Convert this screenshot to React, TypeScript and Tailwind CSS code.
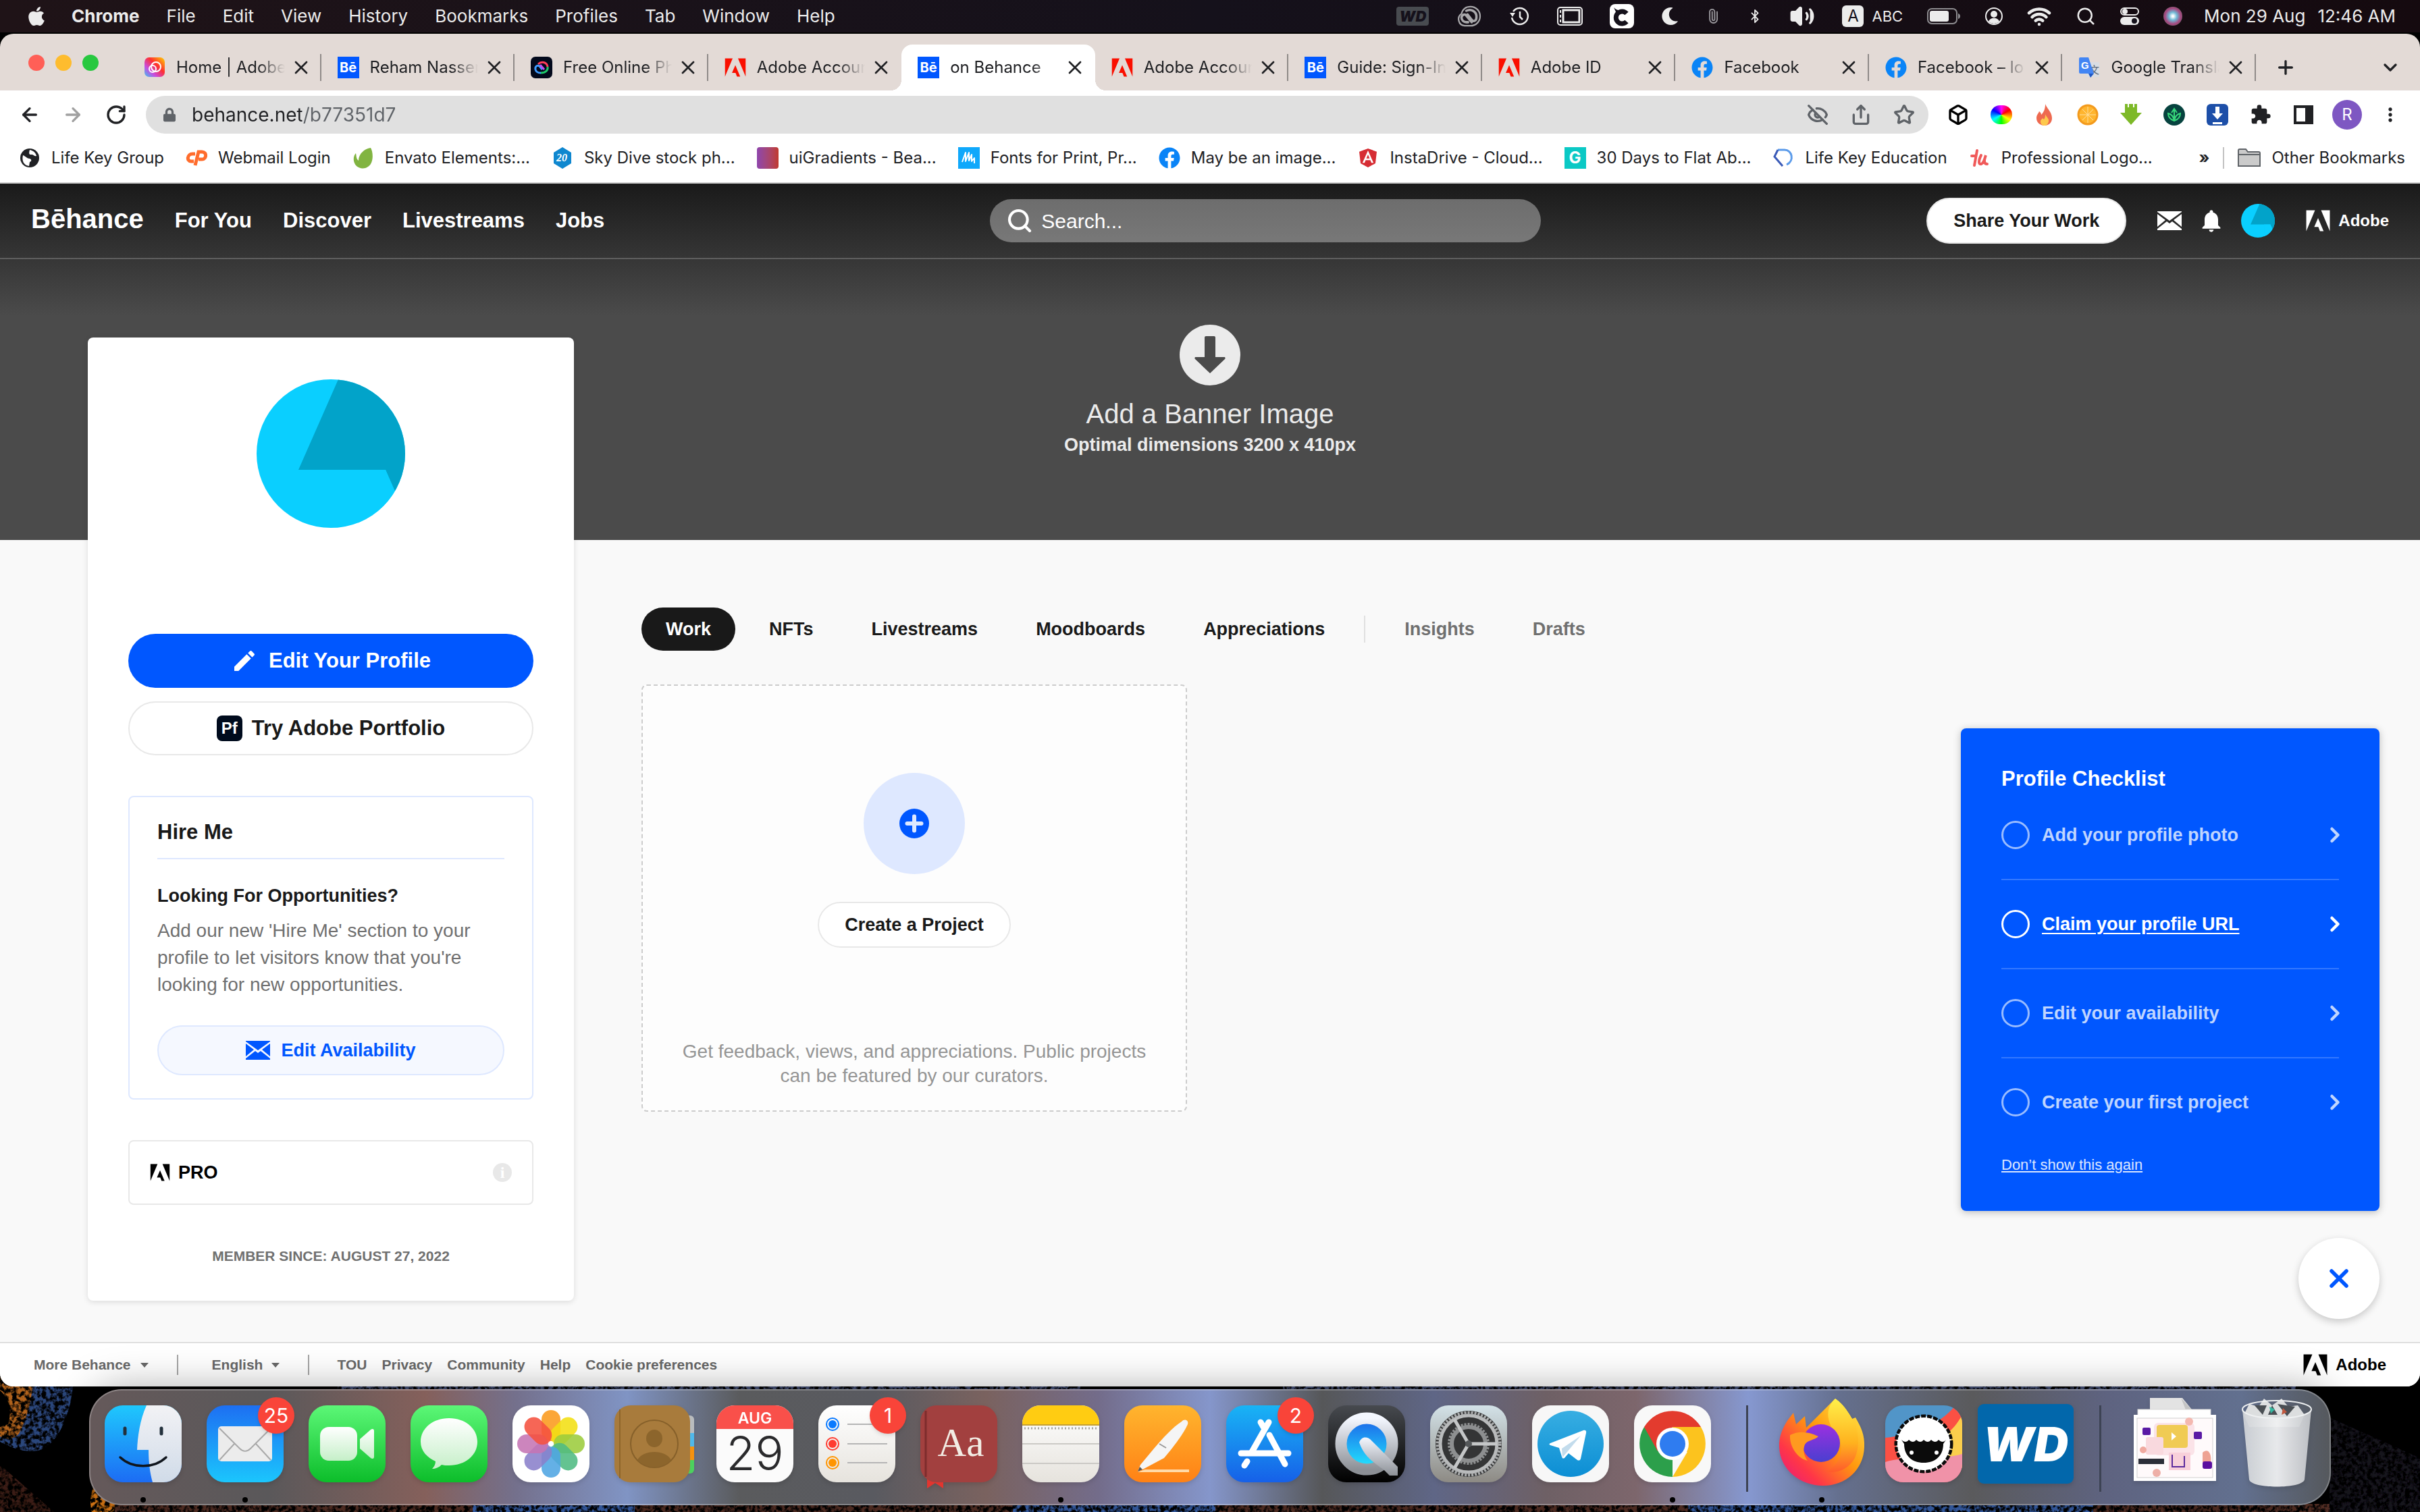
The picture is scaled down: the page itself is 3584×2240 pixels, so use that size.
import type { ReactNode } from "react";
import {
  ArrowLeft,
  ArrowRight,
  Bluetooth,
  Box,
  ChevronDown,
  ChevronRight,
  EyeOff,
  Paperclip,
  Plus,
  RotateCw,
  Search,
  Share,
  Star,
  Volume2,
  Wifi,
  X,
} from "lucide-react";
import {
  FaAngular,
  FaApple,
  FaFacebook,
  FaLock,
  FaMoon,
} from "react-icons/fa";
import { MdEdit, MdExtension, MdMoreVert, MdNotifications } from "react-icons/md";

/* ---------- Shared glyphs ---------- */

interface IconProps {
  className?: string;
}

function AdobeMark({ className }: IconProps) {
  return (
    <svg viewBox="0 1 24 22" className={className} fill="currentColor">
      <path d="M13.966 22.624l-1.69-4.281H8.122l3.892-9.144 5.662 13.425zM8.884 1.376H0v21.248zm15.116 0h-8.884L24 22.624Z" />
    </svg>
  );
}

function MailGlyph({ className }: IconProps) {
  return (
    <svg viewBox="0 0 36 28" className={className} fill="currentColor">
      <path d="M0 0h36v1L18 14 0 1zM0 4l12 9L0 23zM36 4l-12 9 12 10zM0 26l14-11 4 3 4-3 14 11v2H0z" />
    </svg>
  );
}

function Avatar({ className }: IconProps) {
  return (
    <svg viewBox="0 0 220 220" className={className}>
      <clipPath id="avatar-clip">
        <circle cx="110" cy="110" r="110" />
      </clipPath>
      <g clipPath="url(#avatar-clip)">
        <rect width="220" height="220" fill="#0acfff" />
        <path d="M121 0H220V220H228L191 134H62z" fill="#02a3c9" />
        <path d="M191 134L230 222H150V134z" fill="#0acfff" />
      </g>
    </svg>
  );
}

function BehanceBadge() {
  return (
    <span className="flex h-8 w-8 items-center justify-center bg-[#0057ff] text-[20px] leading-none font-bold text-white">
      Bē
    </span>
  );
}

function AdobeFavicon() {
  return <AdobeMark className="h-7 w-8 text-[#fa0f00]" />;
}

function FacebookFavicon() {
  return <FaFacebook className="h-8 w-8 text-[#0a84f7]" />;
}

function CloudLoops({ className }: IconProps) {
  return (
    <svg
      viewBox="0 0 40 36"
      className={className}
      fill="none"
      stroke="currentColor"
      strokeLinecap="round"
    >
      <path d="M12 34a11 11 0 01-5-20C9 6 15 2 22 2c9 0 16 7 16 16s-7 16-16 16z" strokeWidth="2.5" />
      <path d="M24 28l-9-11c-2-3-7-2-8 3 0 5 4 8 8 8h3" strokeWidth="4" />
      <path d="M15 9c8-4 17 1 17 10 0 7-5 9-8 5l-7-9" strokeWidth="4" />
    </svg>
  );
}

function CreativeCloudFavicon({ dark }: { dark?: boolean }) {
  return dark ? (
    <svg viewBox="0 0 32 32" className="h-8 w-8">
      <rect width="32" height="32" rx="7" fill="#03091c" />
      <g fill="none" strokeWidth="3">
        <path d="M17 19l-4-5c-3-2-7 0-6 5 1 4 4 5 8 5" stroke="#3f9bff" />
        <path d="M15 24c7 0 11-4 10-9" stroke="#1ec96b" />
        <path d="M25 15c-1-7-9-9-14-4" stroke="#ff3d5a" />
        <path d="M14 12l6 7" stroke="#c54bf0" />
      </g>
    </svg>
  ) : (
    <svg viewBox="0 0 32 32" className="h-8 w-8">
      <defs>
        <linearGradient id="cc-rainbow" x1="0" y1="1" x2="1" y2="0">
          <stop offset="0" stopColor="#37c8f0" />
          <stop offset=".3" stopColor="#c94be0" />
          <stop offset=".6" stopColor="#ff2f2f" />
          <stop offset="1" stopColor="#ffd500" />
        </linearGradient>
      </defs>
      <rect width="30" height="29" x="1" y="1" rx="7" fill="url(#cc-rainbow)" />
      <g fill="none" stroke="#fff" strokeWidth="2">
        <circle cx="13" cy="18" r="5" />
        <circle cx="18" cy="15" r="7" />
      </g>
    </svg>
  );
}

function TranslateFavicon() {
  return (
    <svg viewBox="0 0 32 32" className="h-8 w-8">
      <rect x="12" y="8" width="19" height="22" rx="2" fill="#d9dde3" />
      <text x="16" y="25" fontSize="15" fill="#5f6b7a" fontFamily="Noto Sans CJK SC">文</text>
      <path d="M3 1h12l8 24H3a2 2 0 01-2-2V3a2 2 0 012-2z" fill="#4285f4" />
      <path d="M15 25h8l-5 6z" fill="#1f57c3" />
      <text x="4" y="18" fontSize="15" fontWeight="700" fill="#fff" fontFamily="Liberation Sans">G</text>
    </svg>
  );
}

/* ---------- macOS menu bar ---------- */

const MENUS = ["File", "Edit", "View", "History", "Bookmarks", "Profiles", "Tab", "Window", "Help"];

function MenuBar() {
  return (
    <header className="relative flex h-12 items-center justify-between bg-linear-to-r from-[#1f1317] via-[#15111b] to-[#150a0f] pr-9 pl-[38px] font-['Inter',sans-serif] text-[26px] leading-none text-[#ececec]">
      <nav className="flex items-center gap-10">
        <FaApple className="h-8 w-8" />
        <button className="-ml-1 font-bold">Chrome</button>
        {MENUS.map((menu) => (
          <button key={menu}>{menu}</button>
        ))}
      </nav>

      <div className="flex items-center gap-10">
        <span className="flex h-7 w-12 items-center justify-center rounded-sm bg-[#484b50] text-[22px] font-black text-[#15111b] italic">
          WD
        </span>
        <CloudLoops className="h-8 w-10 text-[#a9a8ab]" />
        <svg viewBox="0 0 30 30" className="h-[30px] w-[30px]" fill="none" stroke="currentColor" strokeWidth="2.5">
          <path d="M5 8a12 12 0 11-2 9M15 8v8l4 4" />
          <path d="M0 10h8l-4 6z" fill="currentColor" stroke="none" />
        </svg>
        <svg viewBox="0 0 38 28" className="h-7 w-[38px]" fill="none" stroke="currentColor">
          <rect x="1" y="1" width="36" height="26" rx="4" strokeWidth="2" />
          <rect x="9" y="5" width="24" height="18" strokeWidth="3" />
          <path d="M5 5v18" strokeWidth="2" strokeDasharray="4 3" />
        </svg>
        <svg viewBox="0 0 36 36" className="h-9 w-9">
          <rect width="36" height="36" rx="8" fill="#fff" />
          <path d="M25 14a9 9 0 100 12" fill="none" stroke="#15111b" strokeWidth="7" />
          <path d="M6 5c3 4 8 4 14 6l-9 5z" fill="#15111b" />
        </svg>
        <FaMoon className="h-[26px] w-[26px]" />
        <Paperclip className="h-8 w-[22px] -rotate-45 text-[#9c9a9f]" />
        <Bluetooth className="h-[34px] w-[22px]" strokeWidth={2} />
        <Volume2 className="h-[38px] w-[38px]" fill="currentColor" strokeWidth={2} />

        <div className="flex items-center gap-9">
          <span className="flex items-center gap-3 text-[22px]">
            <span className="flex h-8 w-8 items-center justify-center rounded-md bg-[#ececec] text-[24px] text-[#15111b]">
              A
            </span>
            ABC
          </span>
          <svg viewBox="0 0 50 24" className="h-6 w-[50px]">
            <rect x="1" y="1" width="43" height="22" rx="6" fill="none" stroke="#8d8c90" strokeWidth="2" />
            <rect x="4" y="4" width="28" height="16" rx="3" fill="#ececec" />
            <path d="M46 8c4 1 4 7 0 8z" fill="#8d8c90" />
          </svg>
          <svg viewBox="0 0 26 26" className="h-[26px] w-[26px]">
            <circle cx="13" cy="13" r="12" fill="none" stroke="currentColor" strokeWidth="2" />
            <circle cx="13" cy="10" r="5" fill="currentColor" />
            <path d="M5 21c2-7 14-7 16 0a12 12 0 01-16 0z" fill="currentColor" />
          </svg>
          <Wifi className="h-9 w-9" strokeWidth={3} />
          <Search className="h-[30px] w-[30px]" strokeWidth={2} />
          <svg viewBox="0 0 28 26" className="h-[26px] w-7">
            <rect x="1" y="1" width="26" height="10" rx="5" fill="none" stroke="currentColor" strokeWidth="2" />
            <circle cx="7" cy="6" r="4" fill="currentColor" />
            <rect y="14" width="28" height="12" rx="6" fill="currentColor" />
            <circle cx="21" cy="20" r="4" fill="#15111b" />
          </svg>
          <span className="h-7 w-7 rounded-full bg-[radial-gradient(circle,#ffffff_5%,#6fb9d6_30%,#a8447c_60%,#2c8f6b_100%)]" />
          <span className="-ml-1 flex gap-[18px]">
            <span>Mon 29 Aug</span>
            <span>12:46 AM</span>
          </span>
        </div>
      </div>
    </header>
  );
}

/* ---------- Browser chrome ---------- */

interface Tab {
  title: string;
  icon: ReactNode;
  active?: boolean;
  divider?: boolean;
}

const TABS: Tab[] = [
  { title: "Home | Adobe", icon: <CreativeCloudFavicon />, divider: true },
  { title: "Reham Nasser", icon: <BehanceBadge />, divider: true },
  { title: "Free Online Ph", icon: <CreativeCloudFavicon dark />, divider: true },
  { title: "Adobe Accoun", icon: <AdobeFavicon /> },
  { title: "on Behance", icon: <BehanceBadge />, active: true },
  { title: "Adobe Accoun", icon: <AdobeFavicon />, divider: true },
  { title: "Guide: Sign-In", icon: <BehanceBadge />, divider: true },
  { title: "Adobe ID", icon: <AdobeFavicon />, divider: true },
  { title: "Facebook", icon: <FacebookFavicon />, divider: true },
  { title: "Facebook – lo", icon: <FacebookFavicon />, divider: true },
  { title: "Google Transla", icon: <TranslateFavicon />, divider: true },
];

function BrowserTab({ tab }: { tab: Tab }) {
  return (
    <div
      className={`relative flex h-[68px] min-w-0 flex-1 items-center pr-3.5 pl-6 ${
        tab.active ? "rounded-t-2xl bg-white" : ""
      }`}
    >
      {tab.active && (
        <>
          <span className="absolute bottom-0 -left-4 h-4 w-4 bg-[radial-gradient(circle_at_0_0,transparent_16px,white_16px)]" />
          <span className="absolute -right-4 bottom-0 h-4 w-4 bg-[radial-gradient(circle_at_100%_0,transparent_16px,white_16px)]" />
        </>
      )}
      <span className="flex w-8 shrink-0 justify-center">{tab.icon}</span>
      <span className="ml-4 min-w-0 flex-1 overflow-hidden [mask-image:linear-gradient(to_right,black_75%,transparent)] leading-8 whitespace-nowrap">
        {tab.title}
      </span>
      <button aria-label={`Close ${tab.title}`} className="ml-2">
        <X className="h-8 w-8" strokeWidth={2} />
      </button>
      {tab.divider && <span className="absolute top-[14px] right-0 h-10 w-0.5 bg-[#8f8a88]" />}
    </div>
  );
}

function TabStrip() {
  return (
    <div className="flex items-end rounded-t-[20px] bg-[#e3dad6] pt-4 text-[24px]">
      <div className="flex h-[68px] w-[189px] shrink-0 items-center gap-4 pb-3.5 pl-[42px]">
        <button aria-label="Close window" className="h-6 w-6 rounded-full bg-[#ff5f57]" />
        <button aria-label="Minimise window" className="h-6 w-6 rounded-full bg-[#febc2e]" />
        <button aria-label="Zoom window" className="h-6 w-6 rounded-full bg-[#28c840]" />
      </div>
      <div className="flex min-w-0 flex-1">
        {TABS.map((tab, index) => (
          <BrowserTab key={index} tab={tab} />
        ))}
      </div>
      <div className="flex h-[68px] w-[243px] shrink-0 items-center justify-between pr-7 pl-7">
        <button aria-label="New tab">
          <Plus className="h-8 w-8" strokeWidth={2.5} />
        </button>
        <button aria-label="Search tabs">
          <ChevronDown className="h-8 w-8" strokeWidth={2.5} />
        </button>
      </div>
    </div>
  );
}

function Extensions() {
  return (
    <div className="flex items-center gap-8">
      <Box className="h-9 w-8 text-black" strokeWidth={2.5} />
      <span className="h-7 w-8 rounded-full bg-[conic-gradient(#f0f,#f00,#ff0,#0f0,#0ff,#00f,#f0f)]" />
      <svg viewBox="0 0 32 32" className="h-8 w-8">
        <path d="M17 0c2 6 10 12 10 21 0 7-5 11-11 11S4 28 4 21c0-5 3-7 4-10 2 1 3 3 3 5 4-4 6-9 6-16z" fill="#ee6a50" />
        <path d="M17 15c1 4 6 6 5 11-1 4-3 6-6 6s-6-2-6-6c0-3 2-3 3-5l2 2c2-3 2-5 2-8z" fill="#fdc94d" />
      </svg>
      <svg viewBox="0 0 32 32" className="h-8 w-8">
        <circle cx="16" cy="16" r="14" fill="#ffb52e" stroke="#f39a1d" strokeWidth="3" />
        <path d="M16 4v24M4 16h24M8 8l16 16M24 8L8 24" stroke="#ffe0a0" strokeWidth="1" />
      </svg>
      <svg viewBox="0 0 32 32" className="h-8 w-8">
        <path d="M7 0h4v5h2V0h6v5h2V0h4v13h7L16 31 0 13h7z" fill="#7db928" />
      </svg>
      <svg viewBox="0 0 32 32" className="h-8 w-8">
        <circle cx="16" cy="16" r="16" fill="#07433f" />
        <path d="M16 25c-6-2-9-6-9-11 5 1 8 5 9 11 1-6 4-10 9-11 0 5-3 9-9 11zM16 23V7m-4 6l4-6 4 6" fill="none" stroke="#37d67a" strokeWidth="2" />
      </svg>
      <svg viewBox="0 0 32 32" className="h-8 w-8">
        <rect width="32" height="32" rx="6" fill="#1d4fa8" />
        <path d="M13 4h6v10h5l-8 9-8-9h5z" fill="#fff" />
        <path d="M9 27h14v3H9z" fill="#fff" />
      </svg>
      <MdExtension className="h-[34px] w-8 text-[#202124]" />
      <svg viewBox="0 0 32 28" className="h-7 w-8">
        <rect x="3" y="2" width="25" height="24" fill="none" stroke="#202124" strokeWidth="4" />
        <rect x="18" y="2" width="10" height="24" fill="#202124" />
      </svg>
      <span className="-mx-1.5 flex h-11 w-11 items-center justify-center rounded-full bg-[#7e57c2] text-[24px] text-white">
        R
      </span>
      <button aria-label="Browser menu" className="-mr-2 text-[#202124]">
        <MdMoreVert className="h-10 w-8" />
      </button>
    </div>
  );
}

function Toolbar() {
  return (
    <div className="flex items-center gap-7 bg-white py-2 pr-9 pl-7">
      <div className="flex items-center gap-8">
        <button aria-label="Back">
          <ArrowLeft className="h-8 w-8" strokeWidth={2.5} />
        </button>
        <button aria-label="Forward" className="text-[#a0a0a0]">
          <ArrowRight className="h-8 w-8" strokeWidth={2.5} />
        </button>
        <button aria-label="Reload">
          <RotateCw className="h-8 w-8" strokeWidth={2.5} />
        </button>
      </div>
      <div className="flex h-14 flex-1 items-center gap-8 rounded-full bg-[#e0e0e0] pr-5 pl-[26px] text-[#5f6368]">
        <FaLock className="h-[22px] w-[18px]" />
        <input
          aria-label="Address"
          defaultValue="behance.net/b77351d7"
          className="-ml-2 min-w-0 flex-1 bg-[linear-gradient(to_right,#202124_163px,#5f6368_163px)] bg-clip-text text-[28px] leading-10 text-transparent outline-none"
        />
        <EyeOff className="h-8 w-8" strokeWidth={2.5} />
        <Share className="h-8 w-8" strokeWidth={2.5} />
        <Star className="h-8 w-8" strokeWidth={2.5} />
      </div>
      <Extensions />
    </div>
  );
}

const BOOKMARKS: { title: string; icon: ReactNode }[] = [
  {
    title: "Life Key Group",
    icon: (
      <svg viewBox="0 0 32 32" className="h-8 w-8">
        <circle cx="16" cy="16" r="14" fill="#202124" />
        <path d="M6 12c5 2 6 5 10 5 3 1 3 4 0 5l-1 6C7 27 4 20 6 12zM16 4c5 1 9 4 10 9-4 1-4-2-7-2s-5 0-3-7z" fill="#fff" />
      </svg>
    ),
  },
  {
    title: "Webmail Login",
    icon: (
      <svg viewBox="0 0 32 24" className="h-6 w-8" fill="none" stroke="#ff6c2c" strokeWidth="5">
        <path d="M14 6h-4c-8 0-9 11-2 11h4M14 23l5-20h5c8 0 7 11 0 11h-5" />
      </svg>
    ),
  },
  {
    title: "Envato Elements:...",
    icon: (
      <svg viewBox="0 0 32 32" className="h-8 w-8">
        <path d="M27 1c3 5 4 15 1 22-4 9-15 11-22 5-6-6-5-15-1-19 1 3 0 8 4 11C9 10 18 2 27 1z" fill="#81b441" />
      </svg>
    ),
  },
  {
    title: "Sky Dive stock ph...",
    icon: (
      <svg viewBox="0 0 32 32" className="h-8 w-8">
        <path d="M16 0l13 8v16l-13 8-13-8V8z" fill="#0f87cf" />
        <text x="7" y="21" fontSize="16" fontWeight="700" fontStyle="italic" fill="#fff" fontFamily="Liberation Serif">20</text>
      </svg>
    ),
  },
  {
    title: "uiGradients - Bea...",
    icon: <span className="h-8 w-8 rounded-sm bg-linear-to-r from-[#8e44ad] to-[#c0392b]" />,
  },
  {
    title: "Fonts for Print, Pr...",
    icon: (
      <svg viewBox="0 0 32 32" className="h-8 w-8">
        <rect width="32" height="32" fill="#0fa8fb" />
        <path d="M6 22l5-14v13l5-13v12l4-9v10l4-5v8" fill="none" stroke="#fff" strokeWidth="2" strokeLinejoin="round" />
      </svg>
    ),
  },
  { title: "May be an image...", icon: <FacebookFavicon /> },
  { title: "InstaDrive - Cloud...", icon: <FaAngular className="h-8 w-8 text-[#d62d34]" /> },
  {
    title: "30 Days to Flat Ab...",
    icon: (
      <span className="flex h-8 w-8 items-center justify-center bg-[#0bc9c5] text-[24px] font-bold text-white">
        G
      </span>
    ),
  },
  {
    title: "Life Key Education",
    icon: (
      <svg viewBox="0 0 32 28" className="h-7 w-8" fill="none" strokeWidth="3">
        <path d="M21 24c12-6 8-22-3-22L8 2" stroke="#5b9bea" />
        <path d="M8 2L3 12l12 14" stroke="#3b5bb8" />
      </svg>
    ),
  },
  {
    title: "Professional Logo...",
    icon: (
      <svg viewBox="0 0 32 28" className="h-7 w-8" fill="none" stroke="#f05a5a" strokeWidth="4" strokeLinecap="round">
        <path d="M12 3L8 25M4 11h6M18 10c-4 8-4 14 0 13s5-8 7-13c-3 8-3 13 2 13" />
      </svg>
    ),
  },
];

function BookmarksBar() {
  return (
    <div className="flex h-[66px] items-center border-b-2 border-[#cfcfcf] bg-white pr-[22px] pb-2 pl-7 text-[24px]">
      <div className="flex min-w-0 items-center gap-8">
        {BOOKMARKS.map((bookmark) => (
          <a key={bookmark.title} href="#" className="flex shrink-0 items-center gap-4 whitespace-nowrap">
            {bookmark.icon}
            {bookmark.title}
          </a>
        ))}
      </div>
      <button aria-label="More bookmarks" className="ml-auto font-bold">
        »
      </button>
      <span className="mr-5 ml-5 h-8 w-0.5 bg-[#c4c4c4]" />
      <a href="#" className="flex shrink-0 items-center gap-4">
        <svg viewBox="0 0 34 28" className="h-7 w-[34px]">
          <path d="M1 26V3a2 2 0 012-2h9l3 4h16a2 2 0 012 2v19z" fill="#cbcbcb" stroke="#5f6368" strokeWidth="2" />
          <path d="M1 9h32" stroke="#5f6368" strokeWidth="2" />
        </svg>
        Other Bookmarks
      </a>
    </div>
  );
}

/* ---------- Behance page ---------- */

function SiteHeader() {
  return (
    <header className="flex h-28 items-center border-b-2 border-white/20 px-[46px] text-[31px] font-bold text-white">
      <nav className="flex items-center gap-[46px]">
        <a href="#" className="pb-1.5 text-[40px] leading-none">
          Bēhance
        </a>
        <a href="#">For You</a>
        <a href="#">Discover</a>
        <a href="#">Livestreams</a>
        <a href="#">Jobs</a>
      </nav>

      <label className="mx-auto flex h-16 w-[816px] items-center gap-3 rounded-full bg-white/35 px-6">
        <Search className="h-10 w-10" strokeWidth={2.5} />
        <input
          type="search"
          aria-label="Search"
          placeholder="Search..."
          className="min-w-0 flex-1 text-[30px] font-normal outline-none placeholder:text-white"
        />
      </label>

      <div className="flex items-center">
        <button className="h-[68px] rounded-full border-2 border-[#e8e8e8] bg-white px-[38px] text-[27px] text-[#191919]">
          Share Your Work
        </button>
        <button aria-label="Messages" className="ml-[46px]">
          <MailGlyph className="h-7 w-9" />
        </button>
        <button aria-label="Notifications" className="ml-6">
          <MdNotifications className="h-10 w-10" />
        </button>
        <button aria-label="Account" className="ml-6">
          <Avatar className="h-[50px] w-[50px]" />
        </button>
        <a href="#" className="ml-[46px] flex items-center gap-3 text-[24px]">
          <AdobeMark className="h-8 w-9" />
          Adobe
        </a>
      </div>
    </header>
  );
}

function Banner() {
  return (
    <button className="flex h-[416px] w-full flex-col items-center pt-[97px] text-[#ebebeb]">
      <svg viewBox="0 0 90 90" className="h-[90px] w-[90px]">
        <circle cx="45" cy="45" r="45" fill="#ebebeb" />
        <path d="M39 17h12a2 2 0 012 2v29h13c2 0 2 2 1 3L45 72 23 51c-1-1-1-3 1-3h13V19a2 2 0 012-2z" fill="#4b4b4b" />
      </svg>
      <span className="mt-4 text-[40px] leading-[52px]">Add a Banner Image</span>
      <span className="text-[27px] leading-10 font-bold">Optimal dimensions 3200 x 410px</span>
    </button>
  );
}

function ProfileCard() {
  return (
    <aside className="-mt-[300px] w-[720px] shrink-0 rounded-lg bg-white px-[60px] pt-[62px] pb-[50px] shadow-[0_2px_8px_rgba(0,0,0,0.12)]">
      <Avatar className="mx-auto h-[220px] w-[220px]" />

      {/* Profile actions */}
      <div className="mt-[157px] space-y-5 text-[31px] font-bold">
        <button className="flex h-20 w-full items-center justify-center gap-4 rounded-full bg-[#0057ff] text-white">
          <MdEdit className="h-10 w-10" />
          Edit Your Profile
        </button>
        <button className="flex h-20 w-full items-center justify-center gap-3.5 rounded-full border-2 border-[#e8e8e8] text-[#191919]">
          <span className="flex h-[38px] w-[38px] items-center justify-center rounded-lg bg-[#000b1d] text-[24px] leading-none text-white">
            Pf
          </span>
          Try Adobe Portfolio
        </button>
      </div>

      {/* Hire me */}
      <section className="mt-[60px] rounded-lg border-2 border-[#dee8ff] px-[41px] pb-[34px] text-[#191919]">
        <h2 className="border-b-2 border-[#dee8ff] pt-8 pb-[18px] text-[31px] leading-10 font-bold">
          Hire Me
        </h2>
        <h3 className="mt-[34px] text-[27px] leading-10 font-bold">Looking For Opportunities?</h3>
        <p className="mt-3 text-[28px] leading-10 text-[#707070]">
          Add our new 'Hire Me' section to your profile to let visitors know that you're looking for
          new opportunities.
        </p>
        <button className="mt-10 flex h-[74px] w-full items-center justify-center gap-4 rounded-full border-2 border-[#dee8ff] bg-[#f5f8ff] text-[27px] font-bold text-[#0057ff]">
          <MailGlyph className="h-7 w-9" />
          Edit Availability
        </button>
      </section>

      {/* Adobe Pro */}
      <div className="mt-[60px] flex h-24 items-center rounded-lg border-2 border-[#e8e8e8] px-[30px] text-black">
        <AdobeMark className="h-[26px] w-[30px]" />
        <span className="ml-3 text-[27px] font-bold">PRO</span>
        <button
          aria-label="About Adobe Pro"
          className="ml-auto flex h-7 w-7 items-center justify-center rounded-full bg-[#e8e8e8] font-['Liberation_Serif',serif] text-[24px] font-bold text-white"
        >
          i
        </button>
      </div>

      <p className="mt-[60px] text-center text-[21px] leading-8 font-bold text-[#707070]">
        MEMBER SINCE: AUGUST 27, 2022
      </p>
    </aside>
  );
}

const PROFILE_TABS = ["NFTs", "Livestreams", "Moodboards", "Appreciations"];

function WorkArea() {
  return (
    <section className="min-w-0 flex-1 pt-[100px]">
      <nav className="flex h-16 items-center gap-3.5 text-[27px] font-bold text-[#191919]">
        <button className="h-16 rounded-full bg-[#191919] px-9 text-white">Work</button>
        {PROFILE_TABS.map((tab) => (
          <button key={tab} className="h-16 px-9">
            {tab}
          </button>
        ))}
        <span className="mx-2 h-10 w-0.5 bg-[#e0e0e0]" />
        <button className="h-16 px-9 text-[#707070]">Insights</button>
        <button className="h-16 px-9 text-[#707070]">Drafts</button>
      </nav>

      <div className="mt-[50px] flex h-[633px] w-[808px] flex-col items-center rounded-lg border-2 border-dashed border-[#cccccc] bg-[#fdfdfd]">
        <span className="mt-[129px] flex h-[150px] w-[150px] items-center justify-center rounded-full bg-[#dee8ff]">
          <span className="flex h-11 w-11 items-center justify-center rounded-full bg-[#0057ff]">
            <Plus className="h-9 w-9 text-[#dee8ff]" strokeWidth={4} />
          </span>
        </span>
        <button className="mt-[41px] h-[68px] rounded-full border-2 border-[#e8e8e8] bg-white px-[38px] text-[27px] font-bold text-[#191919]">
          Create a Project
        </button>
        <p className="mt-[136px] px-10 text-center text-[28px] leading-9 text-[#959595]">
          Get feedback, views, and appreciations. Public projects can be featured by our curators.
        </p>
      </div>
    </section>
  );
}

const CHECKLIST = [
  { label: "Add your profile photo" },
  { label: "Claim your profile URL", current: true },
  { label: "Edit your availability" },
  { label: "Create your first project" },
];

function ProfileChecklist() {
  return (
    <div className="absolute right-[60px] bottom-[34px] flex w-[620px] flex-col items-end">
      <section className="w-full rounded-lg bg-[#0057ff] px-[60px] pt-[53px] pb-[50px] text-white shadow-[0_2px_12px_rgba(0,0,0,0.25)]">
        <h2 className="text-[31px] leading-[44px] font-bold">Profile Checklist</h2>
        <ul className="-mt-1 divide-y-2 divide-white/20 text-[27px] font-bold">
          {CHECKLIST.map((item) => (
            <li key={item.label}>
              <a
                href="#"
                className={`flex h-[130px] items-center ${item.current ? "underline underline-offset-4" : "text-white/75"}`}
              >
                <span
                  className={`h-[42px] w-[42px] rounded-full border-3 ${
                    item.current ? "border-white" : "border-white/60"
                  }`}
                />
                <span className="ml-[18px]">{item.label}</span>
                <ChevronRight className="-mr-3 ml-auto h-9 w-9" strokeWidth={3} />
              </a>
            </li>
          ))}
        </ul>
        <button className="mt-2.5 text-[22px] leading-9 text-white/85 underline">
          Don’t show this again
        </button>
      </section>
      <button
        aria-label="Close checklist"
        className="mt-10 flex h-[120px] w-[120px] items-center justify-center rounded-full bg-white text-[#0057ff] shadow-[0_4px_12px_rgba(0,0,0,0.2)]"
      >
        <X className="h-11 w-11" strokeWidth={3} />
      </button>
    </div>
  );
}

function Caret() {
  return (
    <svg viewBox="0 0 12 7" className="h-[7px] w-3" fill="currentColor">
      <path d="M0 0h12L6 7z" />
    </svg>
  );
}

function SiteFooter() {
  return (
    <footer className="flex h-[66px] items-center rounded-b-[20px] border-t-2 border-[#dfdfdf] bg-white px-[50px] text-[21px] font-bold text-[#696969]">
      <button className="flex items-center gap-3.5">
        More Behance
        <Caret />
      </button>
      <span className="mx-[42px] h-[30px] w-0.5 bg-[#a5a5a5]" />
      <label className="flex items-center gap-3 pl-2">
        <select aria-label="Language" className="appearance-none" defaultValue="English">
          <option>English</option>
        </select>
        <Caret />
      </label>
      <span className="mx-[42px] h-[30px] w-0.5 bg-[#a5a5a5]" />
      <nav className="flex gap-[22px]">
        <a href="#">TOU</a>
        <a href="#">Privacy</a>
        <a href="#">Community</a>
        <a href="#">Help</a>
        <a href="#">Cookie preferences</a>
      </nav>
      <a href="#" className="ml-auto flex items-center gap-3 text-[24px] text-black">
        <AdobeMark className="h-8 w-9" />
        Adobe
      </a>
    </footer>
  );
}

function BehancePage() {
  return (
    <div className="flex flex-1 flex-col rounded-b-[20px] bg-[#f9f9f9] font-['Liberation_Sans',Arial,sans-serif]">
      <div className="bg-[#4b4b4b] bg-[linear-gradient(#1a1a1a,#4b4b4b_196px)]">
        <SiteHeader />
        <Banner />
      </div>
      <main className="relative flex flex-1 items-start gap-[100px] px-[130px] pb-[61px]">
        <ProfileCard />
        <WorkArea />
        <ProfileChecklist />
      </main>
      <SiteFooter />
    </div>
  );
}

/* ---------- Dock ---------- */

interface DockApp {
  name: string;
  art: ReactNode;
  running?: boolean;
  badge?: string;
}

function Tile({ fill }: { fill: string }) {
  return <rect width="114" height="114" rx="27" fill={fill} />;
}

function DockGradients() {
  return (
    <svg className="absolute h-0 w-0" aria-hidden="true">
      <defs>
        <linearGradient id="d-cyan" x2="0" y2="1">
          <stop stopColor="#1fc8fd" />
          <stop offset="1" stopColor="#1c6cf4" />
        </linearGradient>
        <linearGradient id="d-mail" x2="0" y2="1">
          <stop stopColor="#1d6ff2" />
          <stop offset="1" stopColor="#1bc6fd" />
        </linearGradient>
        <linearGradient id="d-store" x2="0" y2="1">
          <stop stopColor="#19b4f5" />
          <stop offset="1" stopColor="#1660e8" />
        </linearGradient>
        <linearGradient id="d-green" x2="0" y2="1">
          <stop stopColor="#5cf777" />
          <stop offset="1" stopColor="#0cbd2a" />
        </linearGradient>
        <linearGradient id="d-glass" x2="0" y2="1">
          <stop stopColor="#ffffff" />
          <stop offset="1" stopColor="#c5efc8" />
        </linearGradient>
        <linearGradient id="d-pale" x2="0" y2="1">
          <stop stopColor="#ffffff" />
          <stop offset="1" stopColor="#e6e3dd" />
        </linearGradient>
        <linearGradient id="d-face" x2="0" y2="1">
          <stop stopColor="#f2f2f5" />
          <stop offset="1" stopColor="#d0dbe8" />
        </linearGradient>
        <linearGradient id="d-orange" x2="0" y2="1">
          <stop stopColor="#ffb52e" />
          <stop offset="1" stopColor="#ff8115" />
        </linearGradient>
        <linearGradient id="d-black" x2="0" y2="1">
          <stop stopColor="#474a4f" />
          <stop offset="1" stopColor="#000000" />
        </linearGradient>
        <linearGradient id="d-steel" x2="0" y2="1">
          <stop stopColor="#d3e2e8" />
          <stop offset="1" stopColor="#8d8a84" />
        </linearGradient>
        <linearGradient id="d-telegram" x2="0" y2="1">
          <stop stopColor="#37aee2" />
          <stop offset="1" stopColor="#0c8ed4" />
        </linearGradient>
        <linearGradient id="d-ring" x2="0" y2="1">
          <stop stopColor="#f4f7ff" />
          <stop offset="1" stopColor="#8c9096" />
        </linearGradient>
        <linearGradient id="d-lens" x2="0" y2="1">
          <stop stopColor="#1c63e8" />
          <stop offset="1" stopColor="#22eaff" />
        </linearGradient>
        <linearGradient id="d-fox" x1="1" y1="0" x2="0" y2="1">
          <stop stopColor="#fff44f" />
          <stop offset=".45" stopColor="#ff980e" />
          <stop offset=".75" stopColor="#ff3647" />
          <stop offset="1" stopColor="#e31587" />
        </linearGradient>
        <linearGradient id="d-flame" x2="0" y2="1">
          <stop stopColor="#fff04a" />
          <stop offset=".6" stopColor="#ffb21e" />
          <stop offset="1" stopColor="#ff5a2c" />
        </linearGradient>
        <linearGradient id="d-globe" x2="0" y2="1">
          <stop stopColor="#9b30e0" />
          <stop offset="1" stopColor="#4a3fd0" />
        </linearGradient>
        <linearGradient id="d-bin">
          <stop stopColor="#cfd2d6" />
          <stop offset=".5" stopColor="#f0f1f2" />
          <stop offset="1" stopColor="#c3c6ca" />
        </linearGradient>
      </defs>
    </svg>
  );
}

const PETALS: [number, string][] = [
  [0, "#fb9a1c"],
  [45, "#f2df12"],
  [90, "#9ccc3c"],
  [135, "#4fbb82"],
  [180, "#4fa5e2"],
  [225, "#8a7fcb"],
  [270, "#c574b4"],
  [315, "#f5513f"],
];

const DOCK_LEFT: DockApp[] = [
  {
    name: "Finder",
    running: true,
    art: (
      <>
        <clipPath id="finder-clip">
          <rect width="114" height="114" rx="27" />
        </clipPath>
        <g clipPath="url(#finder-clip)">
          <rect width="114" height="114" fill="url(#d-cyan)" />
          <path d="M62 0C52 22 49 46 48 66h17c0 18 2 34 6 48h43V0z" fill="url(#d-face)" />
        </g>
        <path d="M30 34v8M84 34v8" stroke="#22303c" strokeWidth="5" strokeLinecap="round" />
        <path d="M23 77c18 17 50 17 68 0" fill="none" stroke="#10151c" strokeWidth="3.5" strokeLinecap="round" />
      </>
    ),
  },
  {
    name: "Mail",
    running: true,
    badge: "25",
    art: (
      <>
        <Tile fill="url(#d-mail)" />
        <rect x="17" y="31" width="80" height="52" rx="5" fill="#ececec" />
        <path d="M19 81l22-24M95 81L73 57M19 34l30 30c5 5 11 5 16 0l30-30" fill="none" stroke="#a9a9a9" strokeWidth="2" />
      </>
    ),
  },
  {
    name: "FaceTime",
    art: (
      <>
        <Tile fill="url(#d-green)" />
        <rect x="17" y="32" width="55" height="50" rx="13" fill="url(#d-glass)" />
        <path d="M76 50l16-14c3-2 5-1 5 2v38c0 3-2 4-5 2L76 64z" fill="url(#d-glass)" />
      </>
    ),
  },
  {
    name: "Messages",
    art: (
      <>
        <Tile fill="url(#d-green)" />
        <path d="M57 19c24 0 42 15 42 35S81 89 57 89c-4 0-8 0-11-1-4 4-9 6-14 6 3-3 5-7 5-11-13-6-22-16-22-29 0-20 18-35 42-35z" fill="url(#d-glass)" />
      </>
    ),
  },
  {
    name: "Photos",
    art: (
      <>
        <Tile fill="#ffffff" />
        {PETALS.map(([angle, color]) => (
          <rect
            key={angle}
            x="43"
            y="7"
            width="28"
            height="46"
            rx="14"
            fill={color}
            fillOpacity=".88"
            transform={`rotate(${angle} 57 57)`}
          />
        ))}
      </>
    ),
  },
  {
    name: "Contacts",
    art: (
      <>
        <path d="M100 15h12a6 6 0 016 6v20h-18z" fill="#b9bcbe" />
        <path d="M100 41h18v20h-18z" fill="#4fb8ea" />
        <path d="M100 61h18v20h-18z" fill="#f5920f" />
        <path d="M100 81h18v14a6 6 0 01-6 6h-12z" fill="#4cd15e" />
        <rect width="112" height="114" rx="24" fill="#a87b3c" />
        <path d="M8 6v102" stroke="#8f6629" strokeWidth="2" />
        <circle cx="59" cy="57" r="35" fill="none" stroke="#86602a" strokeWidth="2" />
        <ellipse cx="59" cy="49" rx="12" ry="13" fill="#8c652c" />
        <path d="M34 81c8-16 42-16 50 0a35 35 0 01-50 0z" fill="#8c652c" />
      </>
    ),
  },
  {
    name: "Calendar",
    art: (
      <>
        <Tile fill="#fbfbfb" />
        <path d="M0 35V27A27 27 0 0127 0h60a27 27 0 0127 27v8z" fill="#f9504a" />
        <text x="57" y="27" textAnchor="middle" fontSize="23" fontWeight="600" fill="#fff" fontFamily="Inter">AUG</text>
        <text x="57" y="96" textAnchor="middle" fontSize="70" fontWeight="300" fill="#2a2a2c" fontFamily="Inter">29</text>
      </>
    ),
  },
  {
    name: "Reminders",
    badge: "1",
    art: (
      <>
        <Tile fill="url(#d-pale)" />
        <path d="M43 28h59M43 57h59M43 85h59" stroke="#b5b5b5" strokeWidth="2" />
        <g fill="none" strokeWidth="2">
          <circle cx="21" cy="28" r="9" stroke="#0a7aff" />
          <circle cx="21" cy="57" r="9" stroke="#ff3b30" />
          <circle cx="21" cy="85" r="9" stroke="#ff9500" />
        </g>
        <circle cx="21" cy="28" r="6" fill="#0a7aff" />
        <circle cx="21" cy="57" r="6" fill="#ff3b30" />
        <circle cx="21" cy="85" r="6" fill="#ff9500" />
      </>
    ),
  },
  {
    name: "Dictionary",
    art: (
      <>
        <path d="M10 104h24v19l-12-8-12 8z" fill="#e2352f" />
        <rect width="114" height="114" rx="24" fill="#a2403f" />
        <path d="M8 8v98" stroke="#7d2c2d" strokeWidth="3" />
        <text x="60" y="75" textAnchor="middle" fontSize="59" fill="#f2ece4" fontFamily="Liberation Serif">Aa</text>
      </>
    ),
  },
  {
    name: "Notes",
    running: true,
    art: (
      <>
        <Tile fill="url(#d-pale)" />
        <path d="M0 29v-2A27 27 0 0127 0h60a27 27 0 0127 27v2z" fill="#ffcc12" />
        <path d="M0 29h114" stroke="#c5a033" strokeWidth="2" />
        <path d="M3 34h108" stroke="#a5a5a0" strokeWidth="3" strokeDasharray="2 3" />
        <path d="M0 57h114M0 86h114" stroke="#cbc9c5" strokeWidth="2" />
      </>
    ),
  },
  {
    name: "Pages",
    art: (
      <>
        <Tile fill="url(#d-orange)" />
        <path d="M30 95h66v4H20z" fill="#ffd9a8" />
        <path d="M85 24c4-5 11-2 9 4-5 12-21 34-35 50L29 94l-9 4 4-10 20-24c13-15 28-32 41-40z" fill="#f5f5f5" />
        <path d="M52 57l10 6" stroke="#9a9a9a" strokeWidth="2" />
        <path d="M20 98l3-7 4 4z" fill="#555" />
      </>
    ),
  },
  {
    name: "App Store",
    badge: "2",
    art: (
      <>
        <Tile fill="url(#d-store)" />
        <g fill="none" stroke="#fff" strokeWidth="9" strokeLinecap="round">
          <path d="M63 25L38 69M51 25l4 7M64 44l23 43M31 83l-4 6" />
          <path d="M22 71h70" />
        </g>
      </>
    ),
  },
  {
    name: "QuickTime Player",
    art: (
      <>
        <Tile fill="url(#d-black)" />
        <circle cx="57" cy="57" r="38" fill="url(#d-lens)" stroke="url(#d-ring)" strokeWidth="17" />
        <path d="M46 55c3-9 12-10 19-2l38 38v13H91l-9-9c-18-12-30-22-36-40z" fill="url(#d-ring)" />
      </>
    ),
  },
  {
    name: "System Preferences",
    art: (
      <>
        <Tile fill="url(#d-steel)" />
        <circle cx="57" cy="57" r="49" fill="#343536" />
        <circle cx="57" cy="57" r="42" fill="none" stroke="#b9bbbc" strokeWidth="5" />
        <circle cx="57" cy="57" r="46" fill="none" stroke="#a9abac" strokeWidth="5" strokeDasharray="3 2" />
        <circle cx="57" cy="57" r="25" fill="none" stroke="#8d8f90" strokeWidth="6" />
        <circle cx="57" cy="57" r="29" fill="none" stroke="#8d8f90" strokeWidth="4" strokeDasharray="3 2" />
        <path d="M57 57h42M57 57L36 21M57 57L36 93" stroke="#c4c6c7" strokeWidth="5" />
        <circle cx="57" cy="57" r="5" fill="#55585a" />
      </>
    ),
  },
  {
    name: "Telegram",
    art: (
      <>
        <Tile fill="#f7f7f7" />
        <circle cx="57" cy="57" r="49" fill="url(#d-telegram)" />
        <path d="M27 56l49-19c3-1 5 1 4 4l-8 38c-1 3-3 3-5 2L54 71l-6 7c-2 1-3 1-4-2l-4-13-13-4c-2-1-2-2 0-3z" fill="#fff" />
        <path d="M44 64l28-19-20 24-7 8z" fill="#c3dcec" />
      </>
    ),
  },
  {
    name: "Google Chrome",
    running: true,
    art: (
      <>
        <Tile fill="#f8f8f8" />
        <path d="M57 57v49A49 49 0 0115 32z" fill="#2c9f4b" />
        <path d="M57 57V32h42a49 49 0 01-42 74l22-37z" fill="#fcc31e" />
        <path d="M57 32h42A49 49 0 0015 32l20 36z" fill="#e33b2e" />
        <circle cx="57" cy="57" r="24" fill="#fff" />
        <circle cx="57" cy="57" r="19" fill="#2f7cf0" />
      </>
    ),
  },
];

const DOCK_APPS: DockApp[] = [
  {
    name: "Firefox",
    running: true,
    art: (
      <>
        <path d="M77-10c14 10 20 22 25 30l5-2c8 14 14 26 13 44-1 33-27 57-61 57S-5 95-6 62c-1-16 6-31 14-42l7-9 4 17 13-12 2 17z" fill="url(#d-fox)" />
        <path d="M77-10c14 10 20 22 25 30 10 18 12 40 4 58-8 15-26 24-42 20 22-12 26-34 17-50C71 34 56 10 77-10z" fill="url(#d-flame)" />
        <circle cx="56" cy="56" r="28" fill="url(#d-globe)" />
        <path d="M10 44c12-6 26-6 42 2-6 6-16 5-20 12-3 7-2 16 4 24C20 78 9 60 10 44z" fill="#ff9a1f" />
      </>
    ),
  },
  {
    name: "Sheep",
    art: (
      <>
        <clipPath id="sheep-clip">
          <rect width="114" height="114" rx="27" />
        </clipPath>
        <g clipPath="url(#sheep-clip)">
          <rect width="114" height="114" fill="#5195c8" />
          <path d="M0 48C40 44 80 30 104 0h10v114H0z" fill="#fb5044" />
          <path d="M50 64c30-10 50-24 64-50v80H50z" fill="#fbce4c" />
          <path d="M0 84c30-10 80-2 114-12v42H0z" fill="#f092a8" />
        </g>
        <circle cx="57" cy="57" r="41" fill="#fff" stroke="#0b0b0b" strokeWidth="5" strokeDasharray="7 2" />
        <circle cx="57" cy="57" r="39" fill="#fff" />
        <path d="M24 51c4 4 8 4 11 0 4 4 8 4 11 0 4 4 8 4 11 0 4 4 8 4 11 0 4 4 8 4 11 0 4 4 8 4 11 0l-4 6c0 18-12 28-29 28S28 75 28 57z" fill="#0b0b0b" />
        <circle cx="39" cy="70" r="3" fill="#fff" />
        <circle cx="76" cy="70" r="3" fill="#fff" />
      </>
    ),
  },
  {
    name: "WD",
    art: (
      <>
        <rect x="-14" y="-2" width="142" height="118" rx="9" fill="#0267ab" />
        <text x="57" y="83" textAnchor="middle" fontSize="70" fontWeight="900" fontStyle="italic" fill="#fff" fontFamily="Inter">WD</text>
      </>
    ),
  },
];

const DOCK_RIGHT: DockApp[] = [
  {
    name: "Downloads",
    art: (
      <>
        <path d="M20-11h48l18 22H20z" fill="#e3e3e3" />
        <path d="M66-11l20 22-12-2z" fill="#c4c4c4" />
        <rect x="2" y="6" width="108" height="60" fill="#fff" stroke="#d5d5d5" />
        <rect x="-4" y="14" width="122" height="98" fill="#fff" />
        <rect x="1" y="19" width="112" height="88" fill="#fffafb" stroke="#d0d0d0" />
        <rect x="26" y="26" width="60" height="48" rx="6" fill="#fbe3e8" />
        <rect x="30" y="29" width="46" height="34" rx="4" fill="#f0cb54" />
        <path d="M52 40l7 6-7 6z" fill="#fff" />
        <rect x="14" y="47" width="26" height="26" rx="3" fill="#f9d9de" />
        <rect x="48" y="70" width="32" height="26" fill="#f8d0da" />
        <path d="M53 73v18h18V75" fill="none" stroke="#5b2a9d" strokeWidth="2" />
        <rect x="9" y="33" width="12" height="11" rx="2" fill="#5a1aa5" />
        <rect x="85" y="39" width="12" height="11" rx="2" fill="#5a1aa5" />
        <rect x="3" y="79" width="38" height="8" fill="#2b2e38" />
        <path d="M98 70c8-8 14 2 12 14H98z" fill="#eea394" />
        <rect x="98" y="83" width="14" height="11" rx="3" fill="#5a0fa0" />
        <circle cx="30" cy="100" r="6" fill="#eeb0a8" />
        <circle cx="78" cy="24" r="6" fill="#f4b8b0" />
        <circle cx="10" cy="66" r="5" fill="#f0aaa0" />
      </>
    ),
  },
  {
    name: "Trash",
    art: (
      <>
        <path d="M8 14l8-16 14 4 8-12 12 10 14-10 10 12 14-2 10 14-8 18H16z" fill="#dcdedf" />
        <path d="M24 0l12 14 6-14zM58-2l14 18L84 2zM44 14l6-14 8 14z" fill="#4a4f54" />
        <path d="M46 2l8 4-6 6z" fill="#34b8a0" />
        <path d="M66 4l6 6-8 4z" fill="#c0583f" />
        <path d="M6 6c8 16 94 16 102 0l-10 104c-3 14-79 14-82 0z" fill="url(#d-bin)" fillOpacity=".94" />
        <ellipse cx="57" cy="6" rx="51" ry="13" fill="none" stroke="#eef0f1" strokeWidth="2" />
      </>
    ),
  },
];

function DockIcon({ app }: { app: DockApp }) {
  return (
    <button aria-label={app.name} className="relative flex flex-col items-center">
      <svg viewBox="0 0 114 114" className="h-[114px] w-[114px] overflow-visible drop-shadow-md">
        {app.art}
      </svg>
      {app.badge && (
        <span className="absolute -top-3 -right-4 flex h-[54px] w-[54px] items-center justify-center rounded-full bg-[#f94439] text-[30px] text-white shadow-md">
          {app.badge}
        </span>
      )}
      <span className={`mt-[22px] h-2 w-2 rounded-full ${app.running ? "bg-black" : ""}`} />
    </button>
  );
}

function DockDivider() {
  return <span className="mx-[15px] h-32 w-[3px] bg-[#3d4354]" />;
}

function Dock() {
  return (
    <nav
      aria-label="Dock"
      className="relative mx-auto mt-1 mb-2.5 flex h-[172px] w-fit gap-[37px] rounded-[48px] border-2 border-white/25 bg-[linear-gradient(to_right,#65595a,#5a585a_8%,#85605b_15%,#74708c_19%,#8094c4_24%,#5a5b5d_29%,#595a60_35%,#7a625f_40%,#736c8a_45%,#8596cb_50%,#565759_55%,#5f6686_60%,#6e6065_65%,#7d666c_69%,#8698d0_74%,#65708f_78%,#5a5a5c_84%,#5e6380_90%,#62708f_96%,#55585c)] bg-origin-border px-[21px] pt-[22px] font-['Inter',sans-serif] shadow-[0_0_60px_rgba(0,0,0,0.35)]"
    >
      <DockGradients />
      {DOCK_LEFT.map((app) => (
        <DockIcon key={app.name} app={app} />
      ))}
      <DockDivider />
      {DOCK_APPS.map((app) => (
        <DockIcon key={app.name} app={app} />
      ))}
      <DockDivider />
      {DOCK_RIGHT.map((app) => (
        <DockIcon key={app.name} app={app} />
      ))}
    </nav>
  );
}

/* Nebula-like desktop wallpaper, visible around the window and the dock */
function Wallpaper() {
  return (
    <svg
      viewBox="0 0 3584 220"
      preserveAspectRatio="none"
      className="absolute bottom-0 left-0 h-[220px] w-full"
      aria-hidden="true"
    >
      <filter id="grain" x="0" y="0" width="100%" height="100%">
        <feTurbulence type="fractalNoise" baseFrequency=".16" numOctaves="4" seed="4" result="noise" />
        <feColorMatrix in="noise" values="0 0 0 0 0  0 0 0 0 0  0 0 0 0 0  4 0 0 0 -1.5" result="mask" />
        <feComposite in="SourceGraphic" in2="mask" operator="in" />
      </filter>
      <g filter="url(#grain)">
        <path d="M0 20h108c2 40-20 110-60 110-20 0-36-8-48-14z" fill="#2c467c" />
        <path d="M0 20h50c-4 40-10 60-22 84-10 10-20 8-28 4z" fill="#b0621c" />
        <path d="M0 40c14 12 18 30 12 50l-12 4z" fill="#000" />
        <ellipse cx="152" cy="205" rx="18" ry="34" fill="#e07c14" />
        <path d="M0 150l80 70H0z" fill="#3a1c14" />
        <path d="M170 208h3300v12H170z" fill="#5a3228" />
        <path d="M700 208h240v12H700zM1500 208h300v12h-300zM2500 208h600v12h-600z" fill="#3a66b5" />
        <path d="M3450 80l134 60v80h-134z" fill="#15131c" />
        <path d="M500 32h1100v7H500zM1900 32h1500v7H1900z" fill="#46527a" />
      </g>
    </svg>
  );
}

export default function App() {
  return (
    <div className="relative flex min-h-screen flex-col bg-black">
      <Wallpaper />
      <MenuBar />
      <div className="relative mt-0.5 flex flex-1 flex-col font-['Inter',sans-serif] text-[#202124]">
        <TabStrip />
        <Toolbar />
        <BookmarksBar />
        <BehancePage />
      </div>
      <Dock />
    </div>
  );
}
